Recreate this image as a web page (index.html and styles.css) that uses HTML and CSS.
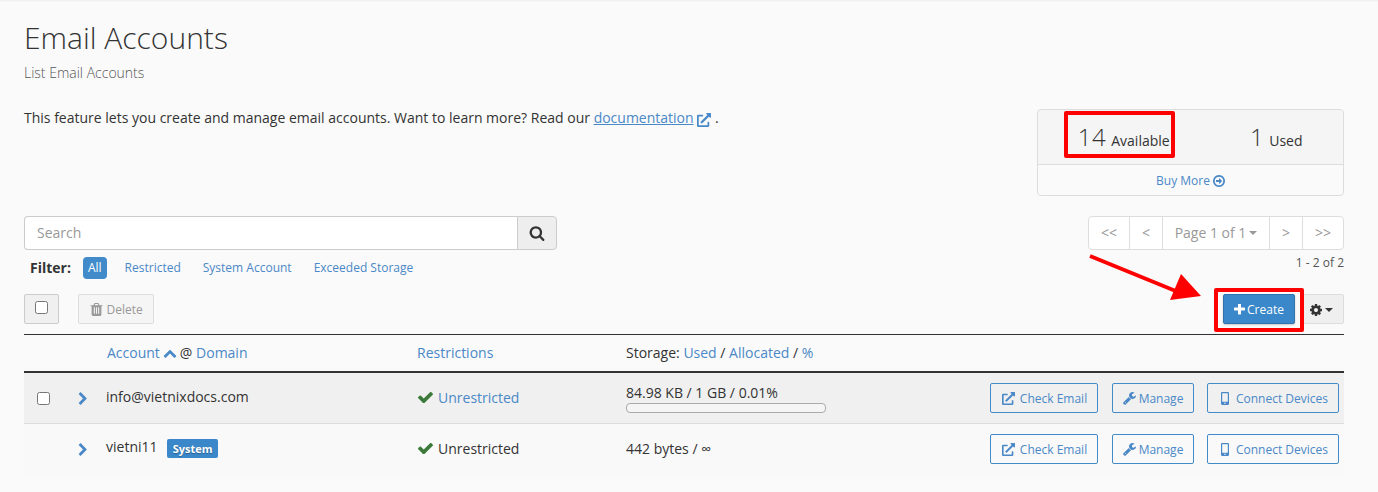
FILE: index.html
```html
<!DOCTYPE html>
<html lang="en">
<head>
<meta charset="utf-8">
<title>Email Accounts</title>
<link rel="stylesheet" href="styles.css">
</head>
<body>
<svg class="sprite" aria-hidden="true">
  <symbol id="i-ext" viewBox="0 0 512 512"><path d="M432,320H400a16,16,0,0,0-16,16V448H64V128H208a16,16,0,0,0,16-16V80a16,16,0,0,0-16-16H48A48,48,0,0,0,0,112V464a48,48,0,0,0,48,48H400a48,48,0,0,0,48-48V336A16,16,0,0,0,432,320ZM488,0h-128c-21.37,0-32.05,25.91-17,41l35.73,35.73L135,320.37a24,24,0,0,0,0,34L157.67,377a24,24,0,0,0,34,0L435.28,133.32,471,169c15,15,41,4.5,41-17V24A24,24,0,0,0,488,0Z"/></symbol>
  <symbol id="i-search" viewBox="0 0 1792 1792"><path d="M1216 832q0-185-131.5-316.5t-316.5-131.5-316.5 131.5-131.5 316.5 131.5 316.5 316.5 131.5 316.5-131.5 131.5-316.5zm512 832q0 52-38 90t-90 38q-54 0-90-38l-343-342q-179 124-399 124-143 0-273.5-55.5t-225-150-150-225-55.5-273.5 55.5-273.5 150-225 225-150 273.5-55.5 273.5 55.5 225 150 150 225 55.5 273.5q0 220-124 399l343 343q37 37 37 90z"/></symbol>
  <symbol id="i-plus" viewBox="192 192 1408 1408"><path d="M1600 736v192q0 40-28 68t-68 28h-416v416q0 40-28 68t-68 28h-192q-40 0-68-28t-28-68v-416h-416q-40 0-68-28t-28-68v-192q0-40 28-68t68-28h416v-416q0-40 28-68t68-28h192q40 0 68 28t28 68v416h416q40 0 68 28t28 68z"/></symbol>
  <symbol id="i-check" viewBox="121 340 1550 1140"><path d="M1671 566q0 40-28 68l-724 724-136 136q-28 28-68 28t-68-28l-136-136-362-362q-28-28-28-68t28-68l136-136q28-28 68-28t68 28l294 295 656-657q28-28 68-28t68 28l136 136q28 28 28 68z"/></symbol>
  <symbol id="i-right" viewBox="0 0 1792 1792"><path d="M1363 877l-742 742q-19 19-45 19t-45-19l-166-166q-19-19-19-45t19-45l531-531-531-531q-19-19-19-45t19-45l166-166q19-19 45-19t45 19l742 742q19 19 19 45t-19 45z"/></symbol>
  <symbol id="i-up" viewBox="0 0 1792 1792"><path d="M1683 1331l-166 165q-19 19-45 19t-45-19l-531-531-531 531q-19 19-45 19t-45-19l-166-165q-19-19-19-45.5t19-45.5l742-741q19-19 45-19t45 19l742 741q19 19 19 45.5t-19 45.5z"/></symbol>
  <symbol id="i-cog" viewBox="128 128 1536 1536"><path d="M1152 896q0-106-75-181t-181-75-181 75-75 181 75 181 181 75 181-75 75-181zm512-109v222q0 12-8 23t-20 13l-185 28q-19 54-39 91 35 50 107 138 10 12 10 25t-9 23q-27 37-99 108t-94 71q-12 0-26-9l-138-108q-44 23-91 38-16 136-29 186-7 28-36 28h-222q-14 0-24.5-8.5t-11.5-21.5l-28-184q-49-16-90-37l-141 107q-10 9-25 9-14 0-25-11-126-114-165-168-7-10-7-23 0-12 8-23 15-21 51-66.5t54-70.5q-27-50-41-99l-183-27q-13-2-21-12.5t-8-23.5v-222q0-12 8-23t19-13l186-28q14-46 39-92-40-57-107-138-10-12-10-24 0-10 9-23 26-36 98.5-107.5t94.5-71.5q13 0 26 10l138 107q44-23 91-38 16-136 29-186 7-28 36-28h222q14 0 24.5 8.5t11.5 21.5l28 184q49 16 90 37l142-107q9-9 24-9 13 0 25 10 129 119 165 170 7 8 7 22 0 12-8 23-15 21-51 66.5t-54 70.5q26 50 41 98l183 28q13 2 21 12.5t8 23.5z"/></symbol>
  <symbol id="i-trash" viewBox="128 128 1536 1536"><path d="M704 1376v-704q0-14-9-23t-23-9h-64q-14 0-23 9t-9 23v704q0 14 9 23t23 9h64q14 0 23-9t9-23zm256 0v-704q0-14-9-23t-23-9h-64q-14 0-23 9t-9 23v704q0 14 9 23t23 9h64q14 0 23-9t9-23zm256 0v-704q0-14-9-23t-23-9h-64q-14 0-23 9t-9 23v704q0 14 9 23t23 9h64q14 0 23-9t9-23zm-544-992h448l-48-117q-7-9-17-11h-317q-10 2-17 11zm928 32v64q0 14-9 23t-23 9h-96v948q0 83-47 143.5t-113 60.5h-832q-66 0-113-58.5t-47-141.5v-952h-96q-14 0-23-9t-9-23v-64q0-14 9-23t23-9h309l70-167q15-37 54-63t79-26h320q40 0 79 26t54 63l70 167h309q14 0 23 9t9 23z"/></symbol>
  <symbol id="i-wrench" viewBox="64 128 1664 1664"><path d="M448 1472q0-26-19-45t-45-19-45 19-19 45 19 45 45 19 45-19 19-45zm644-420l-682 682q-37 37-90 37-52 0-91-37l-106-108q-38-36-38-90 0-53 38-91l681-681q39 98 114.5 173.5t173.5 114.5zm634-435q0 39-23 106-47 134-164.5 217.5t-258.5 83.5q-185 0-316.5-131.5t-131.5-316.5 131.5-316.5 316.5-131.5q58 0 121.5 16.5t107.5 46.5q16 11 16 28t-16 28l-293 169v224l193 107q5-3 79-48.5t135.5-81 70.5-35.5q15 0 23.5 10t8.5 25z"/></symbol>
  <symbol id="i-mobile" viewBox="0 0 320 512"><path d="M272 0H48C21.5 0 0 21.5 0 48v416c0 26.5 21.5 48 48 48h224c26.5 0 48-21.5 48-48V48c0-26.5-21.5-48-48-48zM160 480c-17.7 0-32-14.3-32-32s14.3-32 32-32 32 14.3 32 32-14.3 32-32 32zm112-108c0 6.6-5.4 12-12 12H60c-6.6 0-12-5.4-12-12V60c0-6.6 5.4-12 12-12h200c6.6 0 12 5.4 12 12v312z"/></symbol>
  <symbol id="i-circle" viewBox="128 128 1536 1536"><path d="M1280 896q0 14-9 23l-320 320q-9 9-23 9-13 0-22.5-9.5t-9.5-22.5v-192h-352q-13 0-22.5-9.5t-9.5-22.5v-192q0-13 9.5-22.5t22.5-9.5h352v-192q0-14 9-23t23-9q12 0 24 10l319 319q9 9 9 23zm160 0q0-148-73-273t-198-198-273-73-273 73-198 198-73 273 73 273 198 198 273 73 273-73 198-198 73-273zm224 0q0 209-103 385.5t-279.5 279.5-385.5 103-385.5-103-279.5-279.5-103-385.5 103-385.5 279.5-279.5 385.5-103 385.5 103 279.5 279.5 103 385.5z"/></symbol>
</svg>

<main class="page">
  <header class="page-head">
    <h1 class="title">Email Accounts</h1>
    <p class="subtitle">List Email Accounts</p>
  </header>

  <section class="intro">
    <p class="intro-text">This feature lets you create and manage email accounts. Want to learn more? Read our <a class="doc-link" href="#">documentation</a> <svg class="ic ic-doc"><use href="#i-ext"/></svg> .</p>
    <div class="stats">
      <div class="stats-top">
        <div class="stat"><span class="stat-num">14</span> <span class="stat-label">Available</span></div>
        <div class="stat"><span class="stat-num">1</span> <span class="stat-label">Used</span></div>
      </div>
      <a class="stats-more" href="#">Buy More <svg class="ic ic-buy"><use href="#i-circle"/></svg></a>
    </div>
  </section>

  <section class="controls">
    <div class="controls-left">
      <div class="search">
        <input class="search-input" type="text" placeholder="Search">
        <button class="search-btn" type="button"><svg class="ic ic-search"><use href="#i-search"/></svg></button>
      </div>
      <div class="filters">
        <strong class="filter-label">Filter:</strong>
        <a class="filter filter-on" href="#">All</a>
        <a class="filter" href="#">Restricted</a>
        <a class="filter" href="#">System Account</a>
        <a class="filter" href="#">Exceeded Storage</a>
      </div>
    </div>
    <div class="controls-right">
      <div class="pager">
        <span class="pager-item pager-first">&lt;&lt;</span>
        <span class="pager-item pager-n">&lt;</span>
        <span class="pager-item pager-page">Page 1 of 1<i class="caret caret-grey"></i></span>
        <span class="pager-item pager-n">&gt;</span>
        <span class="pager-item pager-last">&gt;&gt;</span>
      </div>
      <div class="pager-count">1 - 2 of 2</div>
    </div>
  </section>

  <section class="toolbar">
    <span class="check-btn"><i class="box"></i></span>
    <button class="delete-btn" type="button"><svg class="ic ic-trash"><use href="#i-trash"/></svg> Delete</button>
    <div class="toolbar-right">
      <button class="create-btn" type="button"><svg class="ic ic-plus"><use href="#i-plus"/></svg>Create</button>
      <button class="gear-btn" type="button"><svg class="ic ic-cog"><use href="#i-cog"/></svg><i class="caret"></i></button>
    </div>
  </section>

  <section class="table">
    <div class="row row-head">
      <div></div>
      <div></div>
      <div class="head-account"><a href="#">Account</a><svg class="ic ic-up"><use href="#i-up"/></svg>@ <a href="#">Domain</a></div>
      <div><a href="#">Restrictions</a></div>
      <div>Storage: <a href="#">Used</a> / <a href="#">Allocated</a> / <a href="#">%</a></div>
    </div>
    <div class="row row-first">
      <div class="cell-check"><i class="box"></i></div>
      <div><svg class="ic ic-right"><use href="#i-right"/></svg></div>
      <div class="account">info@vietnixdocs.com</div>
      <div class="restrict"><svg class="ic ic-check"><use href="#i-check"/></svg><a href="#">Unrestricted</a></div>
      <div class="storage">
        <div>84.98 KB / 1 GB / 0.01%</div>
        <div class="bar"></div>
      </div>
      <div class="actions">
        <a class="act act-check" href="#"><svg class="ic ic-act"><use href="#i-ext"/></svg> Check Email</a>
        <a class="act act-manage" href="#"><svg class="ic ic-act"><use href="#i-wrench"/></svg> Manage</a>
        <a class="act act-connect" href="#"><svg class="ic ic-phone"><use href="#i-mobile"/></svg> Connect Devices</a>
      </div>
    </div>
    <div class="row row-second">
      <div></div>
      <div><svg class="ic ic-right"><use href="#i-right"/></svg></div>
      <div class="account">vietni11 <span class="tag">System</span></div>
      <div class="restrict"><svg class="ic ic-check"><use href="#i-check"/></svg><span>Unrestricted</span></div>
      <div class="storage">442 bytes / ∞</div>
      <div class="actions">
        <a class="act act-check" href="#"><svg class="ic ic-act"><use href="#i-ext"/></svg> Check Email</a>
        <a class="act act-manage" href="#"><svg class="ic ic-act"><use href="#i-wrench"/></svg> Manage</a>
        <a class="act act-connect" href="#"><svg class="ic ic-phone"><use href="#i-mobile"/></svg> Connect Devices</a>
      </div>
    </div>
  </section>
</main>

<div class="mark mark-stat"></div>
<div class="mark mark-create"></div>
<svg class="mark-arrow" viewBox="0 0 130 60" aria-hidden="true">
  <path class="arrow-line" d="M2 2 L95 40"/>
  <path class="arrow-head" d="M93 20 L113 42 L82 46 Z"/>
</svg>
</body>
</html>
```

FILE: styles.css
```css
* { box-sizing: border-box; }
html, body { margin: 0; height: 492px; overflow: hidden; }
body {
  background: #fafafa;
  color: #333;
  font-family: "Open Sans", "Liberation Sans", sans-serif;
  font-size: 14px;
  line-height: 20px;
  position: relative;
  box-shadow: inset 0 2px 2px -1px #eeeeee;
}
a { color: #4a88c7; text-decoration: none; }
.sprite { display: none; }
.ic { display: inline-block; fill: currentColor; vertical-align: middle; }

.page { padding: 21px 34px 0 24px; }
.title { margin: 0; font-size: 30px; font-weight: 300; line-height: 33px; color: #333; }
.subtitle { margin: 9px 0 0; font-size: 14px; font-weight: 300; line-height: 19px; color: #555; }

.intro { display: flex; justify-content: space-between; align-items: flex-start; margin-top: 18px; }
.intro-text { margin: 8px 0 0; }
.doc-link { text-decoration: underline; }
.ic-doc { width: 14px; height: 14px; color: #4a88c7; margin-top: 2px; }

.stats { width: 307px; height: 87px; margin-top: 9px; border: 1px solid #ddd; border-radius: 4px; background: #f5f5f5; display: flex; flex-direction: column; }
.stats-top { display: grid; grid-template-columns: 1fr 1fr; height: 55px; border-bottom: 1px solid #ddd; }
.stat { display: flex; justify-content: center; align-items: baseline; gap: 5px; padding: 10px 0 0 19px; }
.stat-num { font-size: 24px; font-weight: 300; line-height: 33px; letter-spacing: .5px; }
.stat-label { font-size: 14px; }
.stats-more { flex: 1; display: flex; align-items: center; justify-content: center; gap: 3px; padding-top: 1px; font-size: 12px; background: #fafafa; border-radius: 0 0 4px 4px; }
.ic-buy { width: 12px; height: 12px; }

.controls { display: flex; justify-content: space-between; align-items: flex-start; margin-top: 20px; }
.search { display: flex; width: 533px; height: 34px; }
.search-input { flex: 1; min-width: 0; height: 34px; border: 1px solid #ccc; border-right: 0; border-radius: 4px 0 0 4px; background: #fff; padding: 0 12px 1px; font: 14px "Open Sans", sans-serif; color: #333; outline: none; }
.search-input::placeholder { color: #999; opacity: 1; }
.search-btn { width: 40px; height: 34px; border: 1px solid #ccc; border-radius: 0 4px 4px 0; background: #eee; color: #333; padding: 0; display: flex; align-items: center; justify-content: center; }
.ic-search { width: 16px; height: 16px; }

.filters { display: flex; align-items: center; margin-top: 6px; height: 23px; font-size: 12px; padding-top: 1px; }
.filter-label { font-size: 14px; font-weight: 700; color: #333; margin: 0 12px 0 6px; }
.filter { padding: 0 5px; margin-right: 12px; line-height: 22px; border-radius: 4px; }
.filter-on { background: #428bca; color: #fff; margin-right: 13px; }

.controls-right { display: flex; flex-direction: column; align-items: flex-end; }
.pager { display: flex; height: 34px; border: 1px solid #ddd; border-radius: 4px; background: #fff; color: #999; }
.pager-item { display: flex; align-items: center; justify-content: center; font-size: 14px; }
.pager-item + .pager-item { border-left: 1px solid #ddd; }
.pager-first { width: 40px; }
.pager-last { width: 41px; }
.pager-n { width: 33px; }
.pager-page { width: 107px; }
.pager-count { font-size: 12px; line-height: 16px; margin-top: 4px; padding-top: 1px; color: #555; }

.caret { display: inline-block; width: 0; height: 0; margin-left: 3px; border-top: 4px solid currentColor; border-left: 4px solid transparent; border-right: 4px solid transparent; }

.toolbar { display: flex; align-items: flex-start; height: 41px; margin-top: 15px; border-bottom: 1px solid #333; }
.check-btn { width: 35px; height: 30px; border: 1px solid #ccc; border-radius: 2px; background: #f0f0f0; display: flex; justify-content: center; padding-top: 6px; }
.box { display: block; width: 13px; height: 13px; border: 1px solid #767676; border-radius: 2.5px; background: #fff; }
.delete-btn { margin-left: 19px; width: 76px; height: 30px; padding: 1px 0 0 1px; border: 1px solid #ddd; border-radius: 2px; background: #f5f5f5; color: #999; font: 12px "Open Sans", sans-serif; }
.ic-trash { width: 13px; height: 13px; margin-top: -2px; }
.toolbar-right { margin-left: auto; display: flex; gap: 8px; }
.create-btn { width: 72px; height: 30px; padding: 1px 0 0; border: 1px solid #2f74ad; border-radius: 2px; background: #3a87c9; color: #fff; font: 12px "Open Sans", sans-serif; display: flex; align-items: center; justify-content: center; gap: 2px; box-shadow: 0 1px 2px rgba(0,0,0,.2); }
.ic-plus { width: 11px; height: 11px; }
.gear-btn { width: 41px; height: 30px; padding: 1px 4px 0 0; border: 1px solid #ddd; border-radius: 2px; background: #efefef; color: #333; display: flex; align-items: center; justify-content: center; }
.ic-cog { width: 12px; height: 12px; }

.row { display: grid; grid-template-columns: 46px 36px 311px 209px 1fr 360px; align-items: center; }
.row-head { grid-template-columns: 46px 36px 311px 209px 1fr; height: 38px; border-bottom: 2px solid #333; color: #333; }
.head-account { padding-left: 1px; }
.ic-up { width: 14px; height: 14px; color: #4a88c7; margin: -3px 3px 0 3px; }
.row-first { height: 51px; background: #f0f0f0; border-bottom: 1px solid #ddd; }
.row-second { height: 50px; background: #f9f9f9; }
.cell-check { padding-left: 13px; }
.ic-right { width: 14px; height: 14px; color: #4a88c7; margin-left: 6px; margin-top: -1px; }
.account { margin-top: -3px; }
.tag { display: inline-block; margin-left: 6px; padding: 0 5.5px; height: 19px; line-height: 19px; border-radius: 2px; background: #3a87c9; color: #fff; font-size: 11px; font-weight: 700; vertical-align: -1px; text-shadow: 0 1px 1px rgba(0,0,0,.3); }
.restrict { display: flex; align-items: center; gap: 5px; margin-top: -1px; padding-left: 1px; }
.ic-check { width: 15px; height: 11px; color: #3b7a3a; }
.storage { margin-top: 0; }
.bar { width: 200px; height: 10px; margin-top: 0; border: 1px solid #aaa; border-radius: 4px; background: #f5f5f5; }
.actions { display: flex; justify-content: flex-end; gap: 14px; padding-right: 5px; }
.act { flex: none; display: flex; align-items: center; justify-content: center; gap: 4px; height: 30px; padding-top: 1px; border: 1px solid #428bca; border-radius: 2px; font-size: 12px; }
.act-check { width: 108px; gap: 5px; padding-left: 1px; }
.act-manage { width: 82px; gap: 3px; }
.act-connect { width: 132px; margin-left: -1px; gap: 7px; padding-left: 3px; }
.ic-act { width: 13px; height: 13px; }
.ic-phone { width: 8px; height: 13px; }

.mark { position: absolute; border: 4px solid #f00; border-radius: 2px; }
.mark-stat { left: 1064px; top: 111px; width: 111px; height: 47px; }
.mark-create { left: 1214px; top: 288px; width: 90px; height: 44px; }
.mark-arrow { position: absolute; left: 1088px; top: 254px; width: 130px; height: 60px; }
.arrow-line { stroke: #f00; stroke-width: 4; fill: none; }
.arrow-head { fill: #f00; }
```
